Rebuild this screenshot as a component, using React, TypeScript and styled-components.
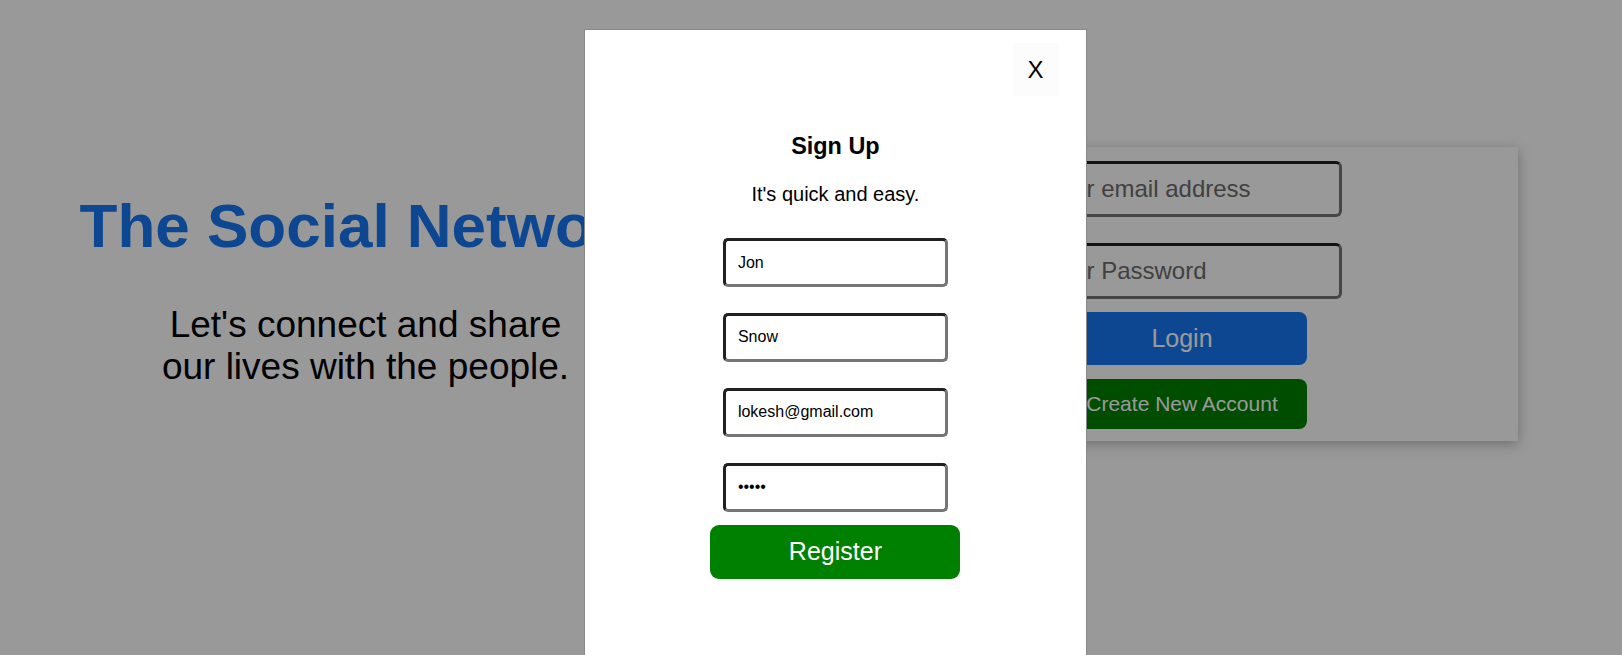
import React from "react";
import styled, { createGlobalStyle } from "styled-components";

const GlobalStyle = createGlobalStyle`
  html, body {
    margin: 0;
    padding: 0;
    background: #ffffff;
    font-family: "Liberation Sans", Arial, Helvetica, sans-serif;
  }
  body {
    overflow: hidden;
  }
  * {
    box-sizing: border-box;
  }
`;

const Page = styled.div`
  display: flex;
  align-items: flex-start;
  width: 100%;
  min-height: 655px;
`;

const Intro = styled.section`
  width: 731px;
  display: flex;
  flex-direction: column;
  align-items: center;
  text-align: center;
  padding-top: 190px;
`;

const BrandTitle = styled.h1`
  margin: 0;
  font-size: 62px;
  font-weight: 700;
  color: #1877f2;
  white-space: nowrap;
  line-height: normal;
`;

const Tagline = styled.p`
  margin: 43px 0 0;
  font-size: 37px;
  line-height: normal;
  color: #000;
`;

const LoginPanel = styled.section`
  margin: 146.5px 104px 0 auto;
  width: 510px;
  padding: 14px 14px 12.5px;
  background: #ffffff;
  box-shadow: 0 3px 12px rgba(0, 0, 0, 0.28);
`;

const LoginForm = styled.form`
  width: 320px;
  display: flex;
  flex-direction: column;
`;

const PanelInput = styled.input<{ $gap?: number }>`
  width: 100%;
  height: 56.5px;
  margin-top: ${(p) => p.$gap ?? 0}px;
  padding: 0 14px 0 21px;
  font-family: inherit;
  font-size: 24px;
  color: #000;
  border: 3px inset #767676;
  border-radius: 6px;
  background: #fff;
  &::placeholder {
    color: #6c6c6c;
  }
`;

const PanelButton = styled.button<{ $bg: string; $h: number; $fs: number; $gap: number }>`
  align-self: center;
  width: 250px;
  height: ${(p) => p.$h}px;
  margin-top: ${(p) => p.$gap}px;
  border: none;
  border-radius: 8px;
  background: ${(p) => p.$bg};
  color: #ffffff;
  font-family: inherit;
  font-size: ${(p) => p.$fs}px;
`;

const Overlay = styled.div`
  position: fixed;
  inset: 0;
  background: rgba(0, 0, 0, 0.4);
  display: flex;
  align-items: flex-start;
  overflow: hidden;
`;

const Modal = styled.div`
  margin: 29px 0 0 36%;
  width: 503px;
  height: 700px;
  border: 1px solid #888888;
  background: #ffffff;
  display: flex;
  flex-direction: column;
  align-items: center;
`;

const CloseRow = styled.div`
  align-self: stretch;
  display: flex;
  justify-content: flex-end;
  padding: 13.3px 28.3px 0 0;
`;

const CloseButton = styled.button`
  width: 44px;
  height: 53px;
  border: none;
  background: #fcfcfc;
  color: #000;
  font-family: inherit;
  font-size: 24px;
  padding: 0;
`;

const ModalTitle = styled.h3`
  margin: 37px 0 0;
  font-size: 23.4px;
  font-weight: 700;
  color: #000;
  line-height: normal;
`;

const ModalSubtitle = styled.p`
  margin: 23px 0 0;
  font-size: 20px;
  color: #000;
  line-height: normal;
`;

const SignupForm = styled.form`
  margin-top: 32px;
  display: flex;
  flex-direction: column;
  align-items: center;
`;

const ModalInput = styled.input<{ $gap?: number }>`
  width: 225px;
  height: 48.6px;
  margin-top: ${(p) => p.$gap ?? 0}px;
  padding: 0 12px;
  font-family: inherit;
  font-size: 16px;
  color: #000;
  border: 3px inset #767676;
  border-radius: 5px;
  background: #fff;
`;

const RegisterButton = styled.button`
  width: 250px;
  height: 53.5px;
  margin-top: 13.5px;
  border: none;
  border-radius: 9px;
  background: #008000;
  color: #ffffff;
  font-family: inherit;
  font-size: 25px;
`;

export default function App() {
  return (
    <>
      <GlobalStyle />
      <Page>
        <Intro>
          <BrandTitle>The Social Network</BrandTitle>
          <Tagline>
            Let's connect and share
            <br />
            our lives with the people.
          </Tagline>
        </Intro>
        <LoginPanel>
          <LoginForm onSubmit={(e) => e.preventDefault()}>
            <PanelInput type="email" placeholder="Your email address" />
            <PanelInput type="password" placeholder="Your Password" $gap={25.5} />
            <PanelButton type="button" $bg="#1877f2" $h={53} $fs={25} $gap={13}>
              Login
            </PanelButton>
            <PanelButton type="button" $bg="#008000" $h={49.5} $fs={21} $gap={14}>
              Create New Account
            </PanelButton>
          </LoginForm>
        </LoginPanel>
      </Page>
      <Overlay>
        <Modal>
          <CloseRow>
            <CloseButton type="button">X</CloseButton>
          </CloseRow>
          <ModalTitle>Sign Up</ModalTitle>
          <ModalSubtitle>It's quick and easy.</ModalSubtitle>
          <SignupForm onSubmit={(e) => e.preventDefault()}>
            <ModalInput type="text" defaultValue="Jon" />
            <ModalInput type="text" defaultValue="Snow" $gap={26.3} />
            <ModalInput type="email" defaultValue="lokesh@gmail.com" $gap={26.3} />
            <ModalInput type="password" defaultValue="12345" $gap={26.3} />
            <RegisterButton type="button">Register</RegisterButton>
          </SignupForm>
        </Modal>
      </Overlay>
    </>
  );
}
